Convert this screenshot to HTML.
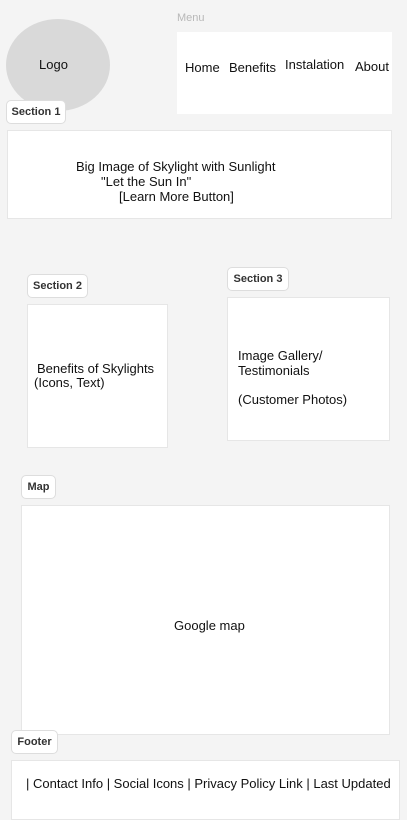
<!DOCTYPE html>
<html><head><meta charset="utf-8"><style>
body{margin:0;width:407px;height:808px;background:#f4f4f4;position:relative;overflow:hidden;font-family:"Liberation Sans",sans-serif;color:#111}
.a{position:absolute}
.box{position:absolute;background:#fff;border:1px solid #e6e6e6;box-sizing:border-box}
.tag{position:absolute;background:#fff;border:1px solid #ddd;border-radius:5px;box-sizing:border-box;font-size:11px;font-weight:bold;color:#333;display:flex;align-items:center;justify-content:center}
.t{position:absolute;font-size:13px;white-space:nowrap;line-height:15px}
</style></head><body>
<div class="a" style="left:6px;top:19px;width:104px;height:92px;border-radius:50%;background:#d9d9d9"></div>
<div class="t" style="left:39px;top:57px;font-size:13px">Logo</div>
<div class="t" style="left:177px;top:11px;font-size:11px;color:#b8b8b8">Menu</div>
<div class="a" style="left:177px;top:32px;width:215px;height:82px;background:#fff"></div>
<div class="t" style="left:185px;top:60px">Home</div>
<div class="t" style="left:229px;top:60px">Benefits</div>
<div class="t" style="left:285px;top:57px">Instalation</div>
<div class="t" style="left:355px;top:59px">About</div>
<div class="box" style="left:7px;top:130px;width:385px;height:89px"></div>
<div class="tag" style="left:6px;top:100px;width:60px;height:24px">Section 1</div>
<div class="t" style="left:76px;top:159px">Big Image of Skylight with Sunlight</div>
<div class="t" style="left:101px;top:174px">"Let the Sun In"</div>
<div class="t" style="left:119px;top:189px">[Learn More Button]</div>
<div class="box" style="left:27px;top:304px;width:141px;height:144px"></div>
<div class="tag" style="left:27px;top:274px;width:61px;height:24px">Section 2</div>
<div class="t" style="left:37px;top:361px">Benefits of Skylights</div>
<div class="t" style="left:34px;top:375px">(Icons, Text)</div>
<div class="box" style="left:227px;top:297px;width:163px;height:144px"></div>
<div class="tag" style="left:227px;top:267px;width:62px;height:24px">Section 3</div>
<div class="t" style="left:238px;top:348px">Image Gallery/</div>
<div class="t" style="left:238px;top:363px">Testimonials</div>
<div class="t" style="left:238px;top:392px">(Customer Photos)</div>
<div class="box" style="left:21px;top:505px;width:369px;height:230px"></div>
<div class="tag" style="left:21px;top:475px;width:35px;height:24px">Map</div>
<div class="t" style="left:174px;top:618px">Google map</div>
<div class="box" style="left:11px;top:760px;width:389px;height:60px"></div>
<div class="tag" style="left:11px;top:730px;width:47px;height:24px">Footer</div>
<div class="t" style="left:26px;top:776px">| Contact Info | Social Icons | Privacy Policy Link | Last Updated</div>
</body></html>
